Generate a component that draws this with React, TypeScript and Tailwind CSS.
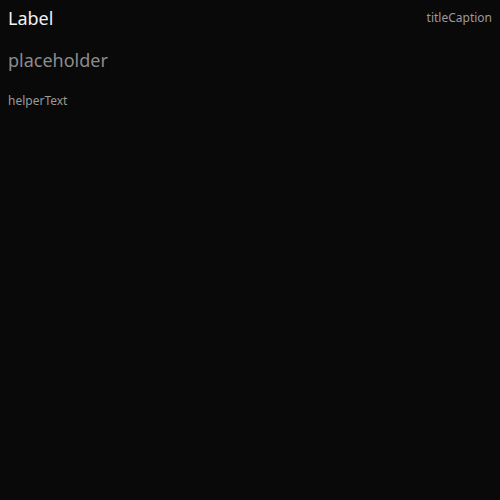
export default function App() {
  return (
    <div className="min-h-[500px] w-[500px] bg-[#090909] px-2 font-['Noto_Sans',sans-serif]">
      <div className="flex items-center justify-between pt-[5px]">
        <span className="text-[18px] leading-[26px] text-[#f2f2f2]">Label</span>
        <span className="text-[12px] leading-[26px] text-[#9a9a9a]">titleCaption</span>
      </div>
      <input
        type="text"
        placeholder="placeholder"
        className="mt-[16px] block w-full bg-transparent text-[18px] leading-[26px] text-[#f2f2f2] outline-none placeholder:text-[#8c8c8c]"
      />
      <p className="mt-[19px] text-[12px] leading-[18px] text-[#9a9a9a]">helperText</p>
    </div>
  );
}
